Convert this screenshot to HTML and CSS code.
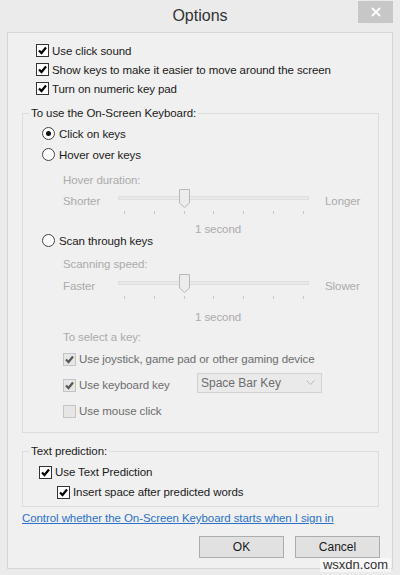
FILE: index.html
```html
<!DOCTYPE html>
<html lang="en">
<head>
<meta charset="utf-8">
<title>Options</title>
<link rel="stylesheet" href="styles.css">
</head>
<body>
<div class="window">
  <div class="titlebar">
    <h1 class="title">Options</h1>
    <button class="close" type="button" aria-label="Close">
      <svg width="10" height="10" viewBox="0 0 10 10"><path d="M1 1L9 9M9 1L1 9" stroke="#fff" stroke-width="2" fill="none"/></svg>
    </button>
  </div>

  <div class="client">
    <div class="top-opts">
      <label class="cb-row"><span class="cb"><svg viewBox="0 0 11 11"><path d="M2 5.5L4.5 8L9 2.5" /></svg></span>Use click sound</label>
      <label class="cb-row"><span class="cb"><svg viewBox="0 0 11 11"><path d="M2 5.5L4.5 8L9 2.5" /></svg></span>Show keys to make it easier to move around the screen</label>
      <label class="cb-row"><span class="cb"><svg viewBox="0 0 11 11"><path d="M2 5.5L4.5 8L9 2.5" /></svg></span>Turn on numeric key pad</label>
    </div>

    <fieldset class="group">
      <legend>To use the On-Screen Keyboard:</legend>
      <div class="gbody g1">
        <label class="rb-row first"><span class="rb on"></span>Click on keys</label>
        <label class="rb-row hover"><span class="rb"></span>Hover over keys</label>
        <div class="dlabel hover-dur">Hover duration:</div>
        <div class="slider s1">
          <span class="s-left">Shorter</span>
          <div class="track">
            <div class="rail"></div>
            <div class="ticks"><i></i><i></i><i></i><i></i><i></i><i></i><i></i></div>
            <svg class="thumb" width="11" height="19" viewBox="0 0 11 19"><path d="M0.5 0.5H10.5V14L5.5 18.5L0.5 14Z" fill="#ececec" stroke="#b8b8b8"/></svg>
          </div>
          <span class="s-right">Longer</span>
        </div>
        <div class="secs secs1">1 second</div>
        <label class="rb-row scan"><span class="rb"></span>Scan through keys</label>
        <div class="dlabel scan-speed">Scanning speed:</div>
        <div class="slider s2">
          <span class="s-left">Faster</span>
          <div class="track">
            <div class="rail"></div>
            <div class="ticks"><i></i><i></i><i></i><i></i><i></i><i></i><i></i></div>
            <svg class="thumb" width="11" height="19" viewBox="0 0 11 19"><path d="M0.5 0.5H10.5V14L5.5 18.5L0.5 14Z" fill="#ececec" stroke="#b8b8b8"/></svg>
          </div>
          <span class="s-right">Slower</span>
        </div>
        <div class="secs secs2">1 second</div>
        <div class="dlabel select-key">To select a key:</div>
        <label class="cb-row dis r-joy"><span class="cb"><svg viewBox="0 0 11 11"><path d="M2 5.5L4.5 8L9 2.5" /></svg></span>Use joystick, game pad or other gaming device</label>
        <div class="cb-row dis r-key">
          <label class="cb-inline"><span class="cb"><svg viewBox="0 0 11 11"><path d="M2 5.5L4.5 8L9 2.5" /></svg></span>Use keyboard key</label>
          <div class="dropdown"><span>Space Bar Key</span><svg width="9" height="6" viewBox="0 0 9 6"><path d="M0.5 0.5L4.5 4.5L8.5 0.5" fill="none" stroke="#b9b9b9"/></svg></div>
        </div>
        <label class="cb-row dis r-mouse"><span class="cb off"></span>Use mouse click</label>
      </div>
    </fieldset>

    <fieldset class="group g2">
      <legend>Text prediction:</legend>
      <div class="gbody tp">
        <label class="cb-row tp1"><span class="cb"><svg viewBox="0 0 11 11"><path d="M2 5.5L4.5 8L9 2.5" /></svg></span>Use Text Prediction</label>
        <label class="cb-row tp2"><span class="cb"><svg viewBox="0 0 11 11"><path d="M2 5.5L4.5 8L9 2.5" /></svg></span>Insert space after predicted words</label>
      </div>
    </fieldset>

    <a class="link" href="#">Control whether the On-Screen Keyboard starts when I sign in</a>

    <div class="buttons">
      <button class="btn" type="button">OK</button>
      <button class="btn" type="button">Cancel</button>
    </div>
  </div>

  <div class="watermark">wsxdn.com</div>
</div>
</body>
</html>
```

FILE: styles.css
```css
* { box-sizing: border-box; }
html, body { margin: 0; padding: 0; }
body {
  width: 400px;
  height: 575px;
  overflow: hidden;
  background: #ebebeb;
  font-family: "Liberation Sans", Arial, sans-serif;
  font-size: 11.5px;
  letter-spacing: -0.08px;
  color: #1a1a1a;
}
.window {
  position: relative;
  width: 400px;
  height: 575px;
}

/* title bar */
.titlebar {
  height: 32px;
  display: grid;
  grid-template-columns: 1fr auto 1fr;
  align-items: start;
}
.title {
  grid-column: 2;
  margin: 0;
  font-weight: normal;
  font-size: 16px;
  letter-spacing: 0;
  line-height: 32px;
  color: #333;
}
.close {
  grid-column: 3;
  justify-self: end;
  margin: 1px 7px 0 0;
  width: 35px;
  height: 22px;
  padding: 0;
  border: none;
  background: #c7c7c7;
  display: flex;
  align-items: center;
  justify-content: center;
}

/* client area */
.client {
  margin: 0 7px;
  height: 537px;
  border: 1px solid #d6d6d6;
  background: #f0f0f0;
}
.top-opts {
  padding: 8px 0 0 28px;
}

/* checkboxes */
.cb-row, .cb-inline {
  display: flex;
  align-items: center;
  gap: 3px;
  height: 19px;
  white-space: nowrap;
}
.cb {
  flex: none;
  width: 13px;
  height: 13px;
  border: 1px solid #333;
  background: #fff;
  display: flex;
  align-items: center;
  justify-content: center;
}
.cb svg {
  width: 11px;
  height: 11px;
  fill: none;
  stroke: #000;
  stroke-width: 2.2;
}
.dis { color: #6d6d6d; }
.dis .cb { background: #e6e6e6; border-color: #c4c4c4; }
.dis .cb svg { stroke: #585858; }

/* radios */
.rb-row {
  display: flex;
  align-items: center;
  gap: 4px;
  height: 13px;
  white-space: nowrap;
}
.rb {
  flex: none;
  width: 13px;
  height: 13px;
  border: 1px solid #444;
  border-radius: 50%;
  background: #fff;
  display: flex;
  align-items: center;
  justify-content: center;
}
.rb.on::after {
  content: "";
  width: 5px;
  height: 5px;
  border-radius: 50%;
  background: #111;
}

/* group boxes */
.group {
  margin: 8px 13px 0 14px;
  padding: 0;
  border: 1px solid #dcdcdc;
  min-width: 0;
}
.group legend {
  margin-left: 6px;
  padding: 0 2px;
  line-height: 15px;
  color: #1a1a1a;
}
.gbody.g1 {
  padding: 6px 0 14px 19px;
}
.rb-row.hover { margin-top: 8px; }
.dlabel {
  color: #ababab;
  line-height: 15px;
  margin-left: 21px;
}
.hover-dur { margin-top: 12px; }
.scan-speed { margin-top: 10px; }
.select-key { margin-top: 8px; }

/* sliders */
.slider {
  margin-left: 21px;
  display: grid;
  grid-template-columns: 55px 191px auto;
  height: 26px;
  color: #ababab;
}
.s1 { margin-top: 1px; }
.s2 { margin-top: 2px; }
.s-left, .s-right {
  line-height: 15px;
  margin-top: 5px;
}
.s-right { padding-left: 16px; }
.track {
  position: relative;
}
.rail {
  margin-top: 7px;
  height: 4px;
  border: 1px solid #dedede;
  background: #e9e9e9;
}
.ticks {
  margin-top: 11px;
  padding: 0 5px 0 6px;
  display: flex;
  justify-content: space-between;
}
.ticks i {
  width: 1px;
  height: 3px;
  background: #c6c6c6;
}
.thumb {
  position: absolute;
  left: 61px;
  top: 0;
}
.secs {
  color: #ababab;
  line-height: 10px;
  padding-left: 153px;
}
.secs1 { margin-top: 9px; }
.secs2 { margin-top: 12px; }

.r-joy { height: 14px; margin-top: 7px; margin-left: 21px; }
.r-key { height: 20px; margin-top: 9px; margin-left: 21px; gap: 0; }
.r-mouse { height: 14px; margin-top: 9px; margin-left: 21px; }
.cb-inline { height: 20px; width: 134px; }
.dropdown {
  align-self: flex-start;
  margin-top: -2px;
  width: 125px;
  height: 20px;
  border: 1px solid #d2d2d2;
  background: #eaeaea;
  display: flex;
  align-items: center;
  justify-content: space-between;
  padding: 0 6px 0 3px;
  font-size: 12px;
  letter-spacing: 0;
  color: #6d6d6d;
}

/* text prediction */
.g2 { margin-top: 11px; }
.gbody.tp {
  padding: 6px 0 7px 16px;
}
.tp1 { height: 14px; }
.tp2 { height: 14px; margin-top: 6px; margin-left: 18px; }

.link {
  display: inline-block;
  margin: 4px 0 0 14px;
  line-height: 15px;
  color: #2c71c7;
  text-decoration: underline;
}

.buttons {
  margin-top: 10px;
  padding-right: 12px;
  display: flex;
  justify-content: flex-end;
  gap: 11px;
}
.btn {
  width: 85px;
  height: 22px;
  padding: 0;
  border: 1px solid #adadad;
  background: #e1e1e1;
  font-family: inherit;
  font-size: 12px;
  letter-spacing: 0;
  color: #1a1a1a;
}

.watermark {
  position: absolute;
  right: 9px;
  bottom: 3px;
  padding: 0 3px;
  background: rgba(255,255,255,0.55);
  font-size: 13px;
  letter-spacing: 0;
  line-height: 14px;
  color: #333;
}
```
